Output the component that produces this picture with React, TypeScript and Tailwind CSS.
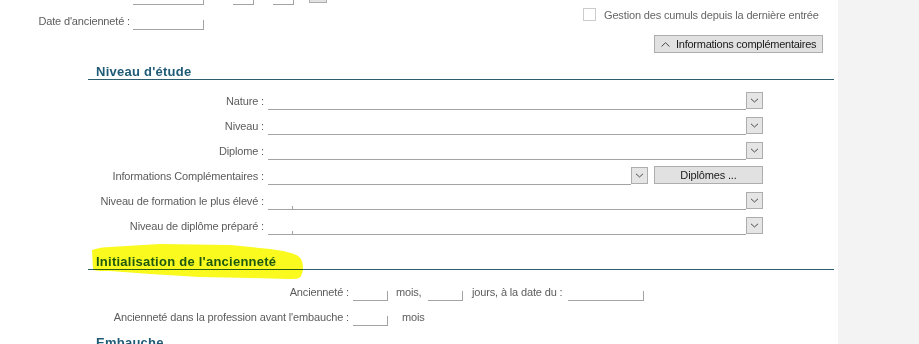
import React from 'react';

const lineColor = 'border-[#a3a3a3]';

function Box({ className }: { className: string }) {
  return <div className={`h-[10px] border-b border-r ${lineColor} ${className}`} />;
}

function Chevron({ up }: { up?: boolean }) {
  return (
    <svg width="9" height="5" viewBox="0 0 9 5" className="block">
      <path
        d={up ? 'M0.5 4.5 L4.5 0.7 L8.5 4.5' : 'M1 0.8 L4.5 4 L8 0.8'}
        fill="none"
        stroke="#4a4a4a"
        strokeWidth="1"
      />
    </svg>
  );
}

function DropBtn() {
  return (
    <div className="w-[17px] h-[17px] mb-[1px] border border-[#adadad] bg-[#e5e5e5] flex items-center justify-center shrink-0">
      <Chevron />
    </div>
  );
}

function ComboRow({ label, tick }: { label: string; tick?: boolean }) {
  return (
    <div className="flex items-end h-[18px]">
      <div className="w-[176px] text-right leading-[14px] mb-[2px]">{label}</div>
      <div className={`relative ml-[4px] w-[478px] h-full border-b ${lineColor}`}>
        {tick && <span className="absolute left-[24px] bottom-0 h-[3px] border-l border-[#a3a3a3]" />}
      </div>
      <DropBtn />
    </div>
  );
}

function Heading({ children }: { children: React.ReactNode }) {
  return (
    <div className="pl-[8px] h-[15px] border-b border-[#2d5e70]">
      <div className="text-[13px] font-bold leading-[14px] text-[#1f5b75] tracking-[0.25px]">{children}</div>
    </div>
  );
}

export default function App() {
  return (
    <div
      className="w-[919px] h-[344px] overflow-hidden flex bg-white text-[11px] text-[#5c5c5c] tracking-[-0.15px]"
      style={{ fontFamily: '"Liberation Sans", Arial, sans-serif' }}
    >
      <div className="w-[838px] shrink-0">
        {/* top block */}
        <div className="h-[65px] flex">
          <div className="w-[583px] shrink-0">
            <div className="flex items-end h-[5px]">
              <Box className="ml-[133px] w-[71px]" />
              <Box className="ml-[29px] w-[21px]" />
              <Box className="ml-[19px] w-[21px]" />
              <div className="ml-[15px] w-[18px] h-[12px] mb-[2px] border border-[#adadad] bg-[#e1e1e1]" />
            </div>
            <div className="flex items-start mt-[9px]">
              <div className="w-[130px] text-right leading-[14px]">Date d'ancienneté :</div>
              <Box className="ml-[3px] mt-[6px] w-[71px]" />
            </div>
          </div>
          <div className="flex-1">
            <div className="flex items-center mt-[8px] h-[13px]">
              <div className="w-[13px] h-[13px] border border-[#cccccc] bg-white" />
              <span className="ml-[8px] leading-[14px] mt-[1px] text-[#666]">Gestion des cumuls depuis la dernière entrée</span>
            </div>
            <div className="ml-[71px] mt-[14px] w-[169px] h-[18px] border border-[#adadad] bg-[#e1e1e1] flex items-center pl-[6px] text-[#1a1a1a] tracking-[-0.25px]">
              <Chevron up />
              <span className="ml-[6px] leading-[14px]">Informations complémentaires</span>
            </div>
          </div>
        </div>

        {/* Niveau d'étude */}
        <div className="ml-[88px] w-[746px]">
          <Heading>Niveau d'étude</Heading>
          <div className="mt-[12px] flex flex-col gap-[7px]">
            <ComboRow label="Nature :" />
            <ComboRow label="Niveau :" />
            <ComboRow label="Diplome :" />
            <div className="flex items-end h-[18px]">
              <div className="w-[176px] text-right leading-[14px] mb-[2px]">Informations Complémentaires :</div>
              <div className={`ml-[4px] w-[363px] h-full border-b ${lineColor}`} />
              <DropBtn />
              <div className="ml-[6px] w-[109px] h-[18px] mb-[1px] border border-[#adadad] bg-[#e1e1e1] flex items-center justify-center text-[#1a1a1a] leading-[14px]">
                Diplômes ...
              </div>
            </div>
            <ComboRow label="Niveau de formation le plus élevé :" tick />
            <ComboRow label="Niveau de diplôme préparé :" tick />
          </div>

          {/* Initialisation de l'ancienneté */}
          <div className="relative mt-[20px]">
            <Heading>Initialisation de l'ancienneté</Heading>
            <svg
              width="220"
              height="40"
              viewBox="0 0 220 40"
              className="absolute left-0 top-[-13px] pointer-events-none mix-blend-multiply"
            >
              <path
                d="M4 8 C10 6 16 5 22 5 L72 2 L142 3 L182 7 C196 9 206 11 210 14 C216 18 216 28 213 34 C211 37 208 37 200 37 L162 36 L112 35 L62 32 L22 29 C12 29 6 29 5 27 Z"
                fill="#fafa1e"
              />
            </svg>
          </div>
          <div className="mt-[15px] flex items-end h-[16px]">
            <div className="w-[261px] text-right leading-[14px] mb-[2px]">Ancienneté :</div>
            <Box className="ml-[4px] w-[35px]" />
            <span className="ml-[8px] w-[32px] leading-[14px] mb-[2px]">mois,</span>
            <Box className="w-[35px]" />
            <span className="ml-[9px] w-[96px] leading-[14px] mb-[2px] whitespace-nowrap">jours, à la date du :</span>
            <Box className="w-[76px]" />
          </div>
          <div className="mt-[9px] flex items-end h-[16px]">
            <div className="w-[261px] text-right leading-[14px] mb-[2px] whitespace-nowrap">
              Ancienneté dans la profession avant l'embauche :
            </div>
            <Box className="ml-[4px] w-[35px]" />
            <span className="ml-[14px] leading-[14px] mb-[2px]">mois</span>
          </div>

          <div className="mt-[10px]">
            <Heading>Embauche</Heading>
          </div>
        </div>
      </div>
      <div className="flex-1 bg-[#f3f3f3]" />
    </div>
  );
}
